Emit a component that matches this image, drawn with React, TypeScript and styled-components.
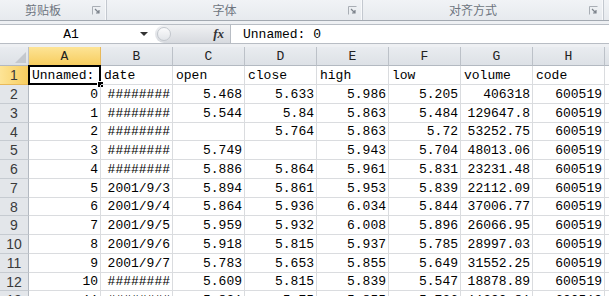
import React from 'react'
import styled, { createGlobalStyle } from 'styled-components'

const GlobalStyle = createGlobalStyle`
  html, body {
    margin: 0;
    padding: 0;
    background: #ffffff;
    overflow: hidden;
  }
  #root {
    width: 609px;
    height: 296px;
    overflow: hidden;
  }
`

const Window = styled.div`
  width: 609px;
  height: 296px;
  display: flex;
  flex-direction: column;
  overflow: hidden;
  background: #fff;
`

const Ribbon = styled.div`
  height: 20px;
  display: flex;
  background: linear-gradient(#f1f3f6, #e7eaee);
  border-bottom: 1px solid #a3a9b1;
  flex: none;
`

const Group = styled.div<{ $w: number }>`
  width: ${p => p.$w}px;
  flex: none;
  display: flex;
  align-items: center;
  border-right: 1px solid #c3c8cf;
  box-shadow: inset -1px 0 0 #f8f9fb;
`

const GroupLabel = styled.span`
  flex: 1;
  text-align: center;
  font-family: "Noto Sans CJK SC", sans-serif;
  font-size: 12px;
  color: #6e7580;
  line-height: 20px;
`

const Launcher = styled.span`
  width: 20px;
  display: flex;
  justify-content: center;
  align-items: center;
  flex: none;
`

const FormulaArea = styled.div`
  padding: 3px 0;
  background: #eef0f3;
  flex: none;
`

const FormulaBar = styled.div`
  height: 18px;
  display: flex;
  background: #fff;
  border-top: 1px solid #b8bdc4;
  border-bottom: 1px solid #b8bdc4;
`

const NameBox = styled.div`
  width: 155px;
  flex: none;
  display: flex;
  align-items: center;
  font-family: "Liberation Mono", monospace;
  font-size: 13px;
  color: #000;
`

const NameText = styled.span`
  flex: 1;
  text-align: center;
  padding-left: 2px;
`

const Arrow = styled.span`
  width: 0;
  height: 0;
  border-left: 4px solid transparent;
  border-right: 4px solid transparent;
  border-top: 4px solid #333;
  margin-right: 7px;
`

const Splitter = styled.div`
  width: 76px;
  flex: none;
  display: flex;
  align-items: center;
  justify-content: space-between;
  background: linear-gradient(#f0f1f3, #d7dadf);
  border-radius: 9px 0 0 9px;
  border-right: 1px solid #b8bdc4;
  padding: 0 6px 0 2px;
  box-sizing: border-box;
`

const Knob = styled.span`
  width: 12px;
  height: 12px;
  border-radius: 50%;
  background: linear-gradient(#fbfbfc, #e2e5e9);
  border: 1px solid #c3c7cd;
`

const Fx = styled.span`
  font-family: "Liberation Serif", serif;
  font-style: italic;
  font-weight: bold;
  font-size: 13px;
  color: #333;
`

const FormulaInput = styled.div`
  flex: 1;
  padding-left: 12px;
  display: flex;
  align-items: center;
  font-family: "Liberation Mono", monospace;
  font-size: 13px;
  color: #000;
  white-space: pre;
`

// 18.75px rows, spread as whole pixels
const Sheet = styled.div`
  display: grid;
  grid-template-columns: 29px repeat(8, 72px) 1fr;
  grid-template-rows: 19px repeat(4, 19px 19px 19px 18px);
  flex: none;
`

const HeadCell = styled.div<{ $active?: boolean }>`
  display: flex;
  align-items: center;
  justify-content: center;
  box-sizing: border-box;
  font-family: "Liberation Mono", monospace;
  font-size: 13px;
  color: #222;
  background: ${p => (p.$active ? 'linear-gradient(#fde496, #f7cd5f)' : 'linear-gradient(#e9ecf0, #dde1e6)')};
  border-right: 1px solid ${p => (p.$active ? '#e8b95a' : '#bcc1c8')};
  border-bottom: 1px solid ${p => (p.$active ? '#f0a33a' : '#b3b9c1')};
`

const Corner = styled(HeadCell)`
  align-items: flex-end;
  justify-content: flex-end;
  padding: 0 2px 2px 0;
`

const RowHead = styled.div<{ $active?: boolean }>`
  display: flex;
  align-items: center;
  justify-content: center;
  box-sizing: border-box;
  font-family: "Liberation Sans", sans-serif;
  font-size: 14px;
  color: #3a3a3a;
  background: ${p => (p.$active ? 'linear-gradient(90deg, #fde496, #f7cd5f)' : '#e3e6ea')};
  border-right: 1px solid ${p => (p.$active ? '#f0a33a' : '#b3b9c1')};
  border-bottom: 1px solid ${p => (p.$active ? '#e8b95a' : '#c6cbd1')};
`

const Cell = styled.div<{ $align: 'left' | 'right' }>`
  position: relative;
  display: flex;
  align-items: center;
  justify-content: ${p => (p.$align === 'left' ? 'flex-start' : 'flex-end')};
  padding: 0 2px 0 3px;
  box-sizing: border-box;
  font-family: "Liberation Mono", monospace;
  font-size: 13px;
  color: #000;
  white-space: pre;
  overflow: hidden;
  border-right: 1px solid #dadcdf;
  border-bottom: 1px solid #dadcdf;
`

const ActiveCell = styled(Cell)`
  overflow: visible;
`

const Selection = styled.span`
  position: absolute;
  left: -1px;
  top: -1px;
  right: -1px;
  bottom: -1px;
  border: 2px solid #000;
  pointer-events: none;
`

const FillHandle = styled.span`
  position: absolute;
  right: -4px;
  bottom: -4px;
  width: 5px;
  height: 5px;
  background: #000;
  border: 1px solid #fff;
`

const LauncherIcon = () => (
  <svg width="9" height="9" viewBox="0 0 9 9">
    <path d="M0.5 8.5 V0.5 H8.5" fill="none" stroke="#a9aeb5" />
    <path d="M3 3 L7 7 M7 4 V7 H4" fill="none" stroke="#7d838c" strokeWidth="1.2" />
  </svg>
)

const cols = ['A', 'B', 'C', 'D', 'E', 'F', 'G', 'H', '']

const header = ['Unnamed:', 'date', 'open', 'close', 'high', 'low', 'volume', 'code']

const rows: string[][] = [
  ['0', '########', '5.468', '5.633', '5.986', '5.205', '406318', '600519'],
  ['1', '########', '5.544', '5.84', '5.863', '5.484', '129647.8', '600519'],
  ['2', '########', '', '5.764', '5.863', '5.72', '53252.75', '600519'],
  ['3', '########', '5.749', '', '5.943', '5.704', '48013.06', '600519'],
  ['4', '########', '5.886', '5.864', '5.961', '5.831', '23231.48', '600519'],
  ['5', '2001/9/3', '5.894', '5.861', '5.953', '5.839', '22112.09', '600519'],
  ['6', '2001/9/4', '5.864', '5.936', '6.034', '5.844', '37006.77', '600519'],
  ['7', '2001/9/5', '5.959', '5.932', '6.008', '5.896', '26066.95', '600519'],
  ['8', '2001/9/6', '5.918', '5.815', '5.937', '5.785', '28997.03', '600519'],
  ['9', '2001/9/7', '5.783', '5.653', '5.855', '5.649', '31552.25', '600519'],
  ['10', '########', '5.609', '5.815', '5.839', '5.547', '18878.89', '600519'],
  ['11', '########', '5.831', '5.75', '5.855', '5.736', '11390.81', '600519'],
]

const App = () => (
  <Window>
    <GlobalStyle />
    <Ribbon>
      <Group $w={106}>
        <GroupLabel>剪贴板</GroupLabel>
        <Launcher><LauncherIcon /></Launcher>
      </Group>
      <Group $w={255}>
        <GroupLabel>字体</GroupLabel>
        <Launcher><LauncherIcon /></Launcher>
      </Group>
      <Group $w={240}>
        <GroupLabel>对齐方式</GroupLabel>
        <Launcher><LauncherIcon /></Launcher>
      </Group>
    </Ribbon>
    <FormulaArea>
      <FormulaBar>
        <NameBox>
          <NameText>A1</NameText>
          <Arrow />
        </NameBox>
        <Splitter>
          <Knob />
          <Fx>fx</Fx>
        </Splitter>
        <FormulaInput>Unnamed: 0</FormulaInput>
      </FormulaBar>
    </FormulaArea>
    <Sheet>
      <Corner>
        <svg width="11" height="11" viewBox="0 0 11 11">
          <polygon points="11,0 11,11 0,11" fill="#c4c8ce" />
        </svg>
      </Corner>
      {cols.map((c, i) => (
        <HeadCell key={'h' + i} $active={c === 'A'}>{c}</HeadCell>
      ))}

      <RowHead $active>1</RowHead>
      {header.map((t, i) =>
        i === 0 ? (
          <ActiveCell key="r1c0" $align="left">
            {t}
            <Selection />
            <FillHandle />
          </ActiveCell>
        ) : (
          <Cell key={'r1c' + i} $align="left">{t}</Cell>
        )
      )}
      <Cell $align="left" />

      {rows.map((r, ri) => (
        <React.Fragment key={'r' + ri}>
          <RowHead>{ri + 2}</RowHead>
          {r.map((v, ci) => (
            <Cell key={ci} $align="right">{v}</Cell>
          ))}
          <Cell $align="right" />
        </React.Fragment>
      ))}
    </Sheet>
  </Window>
)

export default App
